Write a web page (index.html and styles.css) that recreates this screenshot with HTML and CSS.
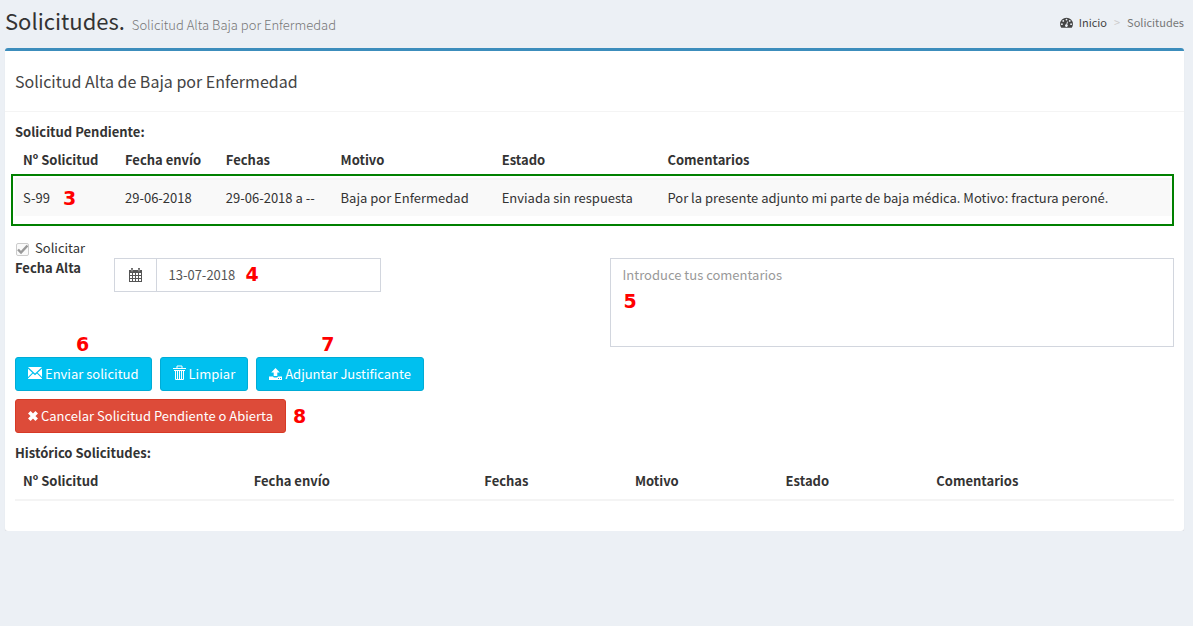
FILE: index.html
```
<!DOCTYPE html>
<html lang="es">
<head>
<meta charset="utf-8">
<title>Solicitudes</title>
<link rel="stylesheet" href="styles.css">
</head>
<body class="page">
<header class="page-header">
  <h1 class="page-title">Solicitudes. <small class="page-subtitle">Solicitud Alta Baja por Enfermedad</small></h1>
  <nav class="breadcrumb" aria-label="Ruta">
    <a class="crumb-link" href="#">
      <svg class="crumb-icon" viewBox="0 0 14 12" aria-hidden="true"><path fill="currentColor" fill-rule="evenodd" d="M7 .8a7 7 0 0 1 7 7c0 1.4-.4 2.600-1.100 3.700-.1.200-.2.200-.4.200h-11c-.2 0-.3 0-.4-.2A6.900 6.900 0 0 1 0 7.800a7 7 0 0 1 7-7zM2 6.800a1 1 0 1 0 0 2 1 1 0 0 0 0-2zM3.500 3.300a1 1 0 1 0 0 2 1 1 0 0 0 0-2zM7 1.800a1 1 0 1 0 0 2 1 1 0 0 0 0-2zM10.500 3.300a1 1 0 1 0 0 2 1 1 0 0 0 0-2zM12 6.800a1 1 0 1 0 0 2 1 1 0 0 0 0-2zM7.600 4.800l-.8 3a1.500 1.500 0 1 0 1 .3l.8-3z"/></svg>
      Inicio</a>
    <span class="crumb-sep">&gt;</span>
    <span class="crumb-current">Solicitudes</span>
  </nav>
</header>
<main class="box">
  <div class="box-header"><h2 class="box-title">Solicitud Alta de Baja por Enfermedad</h2></div>
  <div class="box-body">
    <section class="pending">
      <h3 class="section-title">Solicitud Pendiente:</h3>
      <table class="table pending-table">
        <thead><tr><th class="w-number">Nº Solicitud</th><th class="w-sent">Fecha envío</th><th class="w-dates">Fechas</th><th class="w-reason">Motivo</th><th class="w-status">Estado</th><th>Comentarios</th></tr></thead>
        <tbody><tr class="striped"><td>S-99</td><td>29-06-2018</td><td>29-06-2018 a --</td><td>Baja por Enfermedad</td><td>Enviada sin respuesta</td><td>Por la presente adjunto mi parte de baja médica. Motivo: fractura peroné.</td></tr></tbody>
      </table>
      <div class="highlight"><span class="mark mark-row">3</span></div>
    </section>
    <form class="request">
      <label class="check-label"><input class="check" type="checkbox" checked disabled> Solicitar</label>
      <div class="fields">
        <label class="field-label" for="fecha">Fecha Alta</label>
        <div class="input-group">
          <span class="addon"><svg class="calendar" viewBox="0 0 13 14" aria-hidden="true"><path fill="currentColor" fill-rule="evenodd" d="M0 2h2V.7C2 .3 2.300 0 2.700 0h.6c.4 0 .7.300.7.700V2h5V.7c0-.4.300-.7.700-.7h.6c.4 0 .7.300.7.700V2h2v12H0zM1 5v2h2V5zm3 0v2h2V5zm3 0v2h2V5zm3 0v2h2V5zM1 8v2h2V8zm3 0v2h2V8zm3 0v2h2V8zm3 0v2h2V8zM1 11v2h2v-2zm3 0v2h2v-2zm3 0v2h2v-2zm3 0v2h2v-2zM2.700 1v2.500h.6V1zm7 0v2.500h.6V1z"/></svg></span>
          <input class="control date" id="fecha" type="text" value="13-07-2018">
          <span class="mark mark-date">4</span>
        </div>
        <div class="comment">
          <textarea class="control textarea" aria-label="Comentarios" placeholder="Introduce tus comentarios"></textarea>
          <span class="mark mark-comment">5</span>
        </div>
      </div>
      <div class="actions">
        <div class="anchor"><button class="btn btn-info" type="button"><svg class="icon-mail" viewBox="0 0 14 12" aria-hidden="true"><path fill="currentColor" d="M0 0h14L7 6.500zM0 1.700l4.300 4L0 10zM14 1.700V10L9.700 5.700zM5 6.400l2 1.800 2-1.800 5 5V12H0v-.6z"/></svg>Enviar solicitud</button><span class="mark mark-above-send">6</span></div>
        <button class="btn btn-info" type="button"><svg class="icon-trash" viewBox="0 0 13 16" aria-hidden="true"><g fill="none" stroke="currentColor"><path d="M0 3.500h13M4 3V1h5v2M2.500 5v9.500h8V5M1 5.500h11M4.500 6v8M6.500 6v8M8.500 6v8"/></g></svg>Limpiar</button>
        <div class="anchor"><button class="btn btn-info" type="button"><svg class="icon-upload" viewBox="0 0 13 12" aria-hidden="true"><path fill="currentColor" fill-rule="evenodd" d="M6.500 0l4.300 4.400H8.300V8H4.700V4.400H2.200zM0 8.500h4c.2.700.7 1 1.300 1h2.400c.6 0 1.100-.3 1.300-1h4V12H0zM9 10v1h1v-1zm2 0v1h1v-1z"/></svg>Adjuntar Justificante</button><span class="mark mark-above-attach">7</span></div>
      </div>
      <div class="actions">
        <div class="anchor"><button class="btn btn-danger" type="button"><svg class="icon-close" viewBox="0 0 10 10" aria-hidden="true"><path d="M1.300 1.300l7.400 7.400M8.700 1.300l-7.400 7.400" stroke="currentColor" stroke-width="3.600"/></svg>Cancelar Solicitud Pendiente o Abierta</button><span class="mark mark-beside">8</span></div>
      </div>
    </form>
    <section class="history">
      <h3 class="section-title">Histórico Solicitudes:</h3>
      <table class="table">
        <thead><tr><th class="h-wide">Nº Solicitud</th><th class="h-wide">Fecha envío</th><th class="h-narrow">Fechas</th><th class="h-narrow">Motivo</th><th class="h-narrow">Estado</th><th>Comentarios</th></tr></thead>
      </table>
    </section>
  </div>
</main>
</body>
</html>
```
FILE: styles.css
```
* { box-sizing: border-box; }
.page {
  margin: 0;
  padding: 0 9px 0 5px;
  background: #ecf0f5;
  color: #333;
  font: 13px/20px "Source Sans Pro", "Noto Sans CJK SC", sans-serif;
}
.page-header {
  display: flex;
  justify-content: space-between;
  align-items: center;
  height: 48px;
  padding-bottom: 4px;
}
.page-title { margin: 0; font-size: 22px; font-weight: 400; line-height: 28px; }
.page-subtitle { padding-left: 2px; font-size: 13px; font-weight: 300; color: #777; }
.breadcrumb { display: flex; gap: 7px; align-items: center; font-size: 11px; color: #777; }
.crumb-link { display: flex; gap: 6px; align-items: center; color: #444; text-decoration: none; }
.crumb-icon { width: 13px; height: 11px; }
.crumb-sep { color: #ccc; }

.box {
  background: #fff;
  border-top: 3px solid #3c8dbc;
  border-radius: 3px;
  box-shadow: 0 1px 1px rgba(0, 0, 0, .1);
}
.box-header { padding: 20px 10px; border-bottom: 1px solid #f4f4f4; }
.box-title { margin: 0; font-size: 16px; font-weight: 400; line-height: 20px; color: #444; }
.box-body { padding: 10px 10px 30px; }
.section-title { margin: 0; font-size: 13px; font-weight: 700; line-height: 20px; }

.table { width: 100%; border-collapse: separate; border-spacing: 0; table-layout: fixed; }
.table th { padding: 8px; text-align: left; border-bottom: 2px solid #f4f4f4; }
.table td { padding: 8px; white-space: nowrap; }
.striped { background: #f9f9f9; }
.w-number { width: 8.8%; }
.w-sent { width: 8.7%; }
.w-dates { width: 9.9%; }
.w-reason { width: 13.9%; }
.w-status { width: 14.3%; }
.h-wide { width: 19.9%; }
.h-narrow { width: 13%; }

.pending { position: relative; }
.highlight { position: absolute; top: 52px; right: 0; left: -4px; height: 52px; border: 2px solid #008000; }
.mark {
  position: absolute;
  font: bold 19px/20px "DejaVu Sans", sans-serif;
  color: #f00;
}
.mark-row { top: 12px; left: 50px; }
.mark-date { top: 6px; left: 132px; }
.mark-comment { top: 33px; left: 14px; }
.mark-above-send { top: -23px; left: 61px; }
.mark-above-attach { top: -23px; left: 65px; }
.mark-beside { top: 7px; left: 100%; margin-left: 7px; }

.request { margin: 22px 0 10px; }
.check-label { display: flex; gap: 5px; align-items: center; }
.check {
  appearance: none;
  width: 13px;
  height: 13px;
  margin: 2px 1px 0;
  border: 1px solid #ccc;
  border-radius: 2px;
  background: #fafafa url("data:image/svg+xml,%3Csvg xmlns='http://www.w3.org/2000/svg' viewBox='0 0 11 11'%3E%3Cpath d='M1 5.500l3 3L10.500 1.500' fill='none' stroke='%23999' stroke-width='2.400'/%3E%3C/svg%3E") center / contain no-repeat;
}
.fields { display: grid; grid-template-columns: 8.5% 23.1% 1fr; align-items: start; margin-bottom: 10px; }
.field-label { font-weight: 700; }
.input-group { position: relative; display: flex; height: 34px; }
.addon {
  display: flex;
  flex: none;
  align-items: center;
  justify-content: center;
  width: 42px;
  border: 1px solid #d2d6de;
  border-right: 0;
  color: #555;
}
.calendar { width: 13px; height: 14px; }
.control {
  flex: 1;
  min-width: 0;
  padding: 6px 12px;
  border: 1px solid #d2d6de;
  border-radius: 0;
  background: #fff;
  color: #555;
  font: inherit;
}
.comment { position: relative; width: 71.2%; margin-left: auto; }
.textarea { display: block; width: 100%; height: 89px; resize: none; }
.textarea::placeholder { color: #999; opacity: 1; }

.actions { display: flex; flex-wrap: wrap; gap: 8px; margin-top: 8px; }
.anchor { position: relative; }
.btn {
  display: flex;
  gap: 3px;
  align-items: center;
  height: 34px;
  padding: 0 12px;
  border: 1px solid;
  border-radius: 3px;
  color: #fff;
  font: inherit;
  white-space: nowrap;
}
.btn-info { background: #00c0ef; border-color: #00acd6; }
.btn-danger { background: #dd4b39; border-color: #d73925; }
.icon-mail { width: 14px; height: 12px; margin-bottom: 2px; }
.icon-trash { width: 13px; height: 16px; margin-bottom: 3px; }
.icon-upload { width: 13px; height: 12px; }
.icon-close { width: 10px; height: 10px; }
```
